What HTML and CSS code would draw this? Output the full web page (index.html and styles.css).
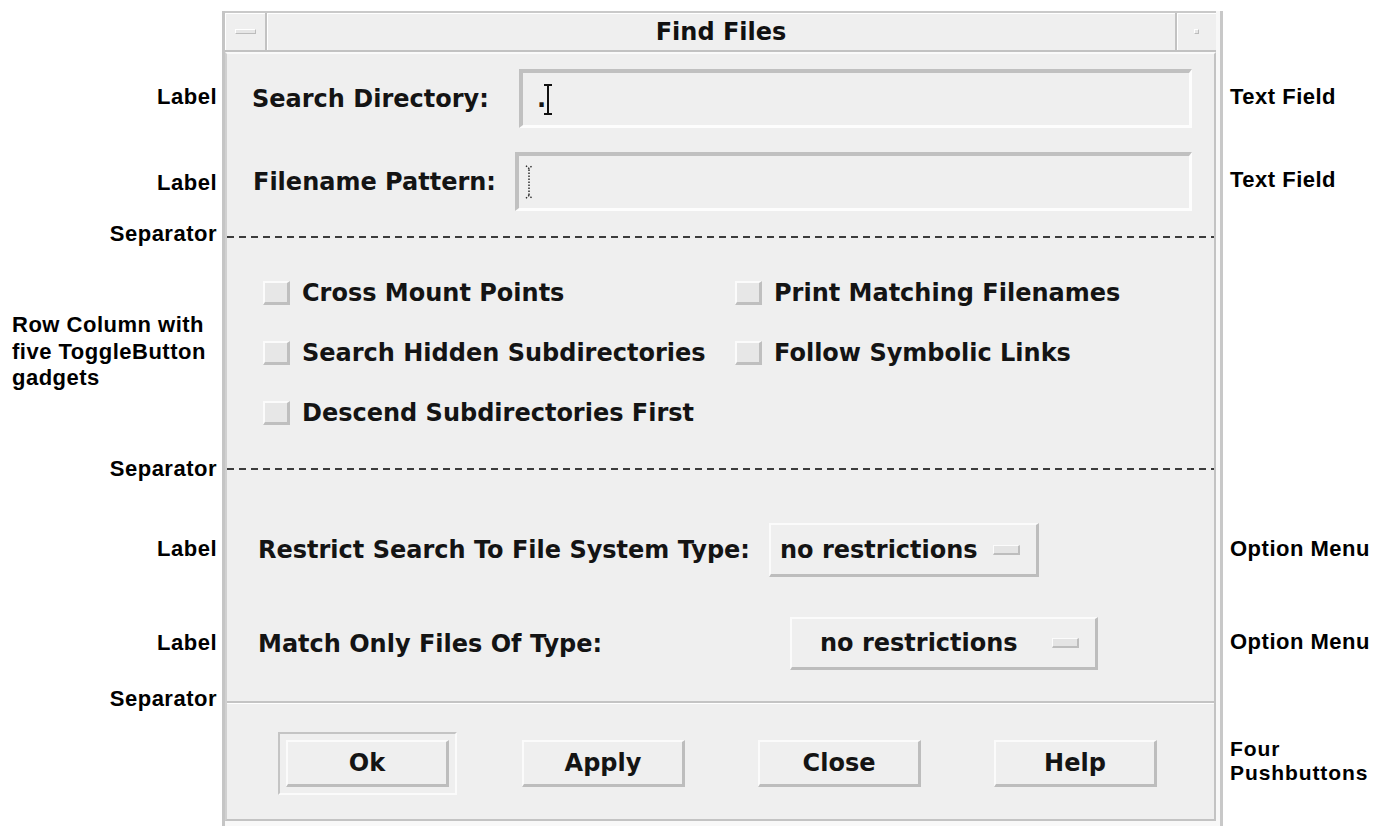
FILE: index.html
```html
<!DOCTYPE html>
<html lang="en">
<head>
<meta charset="utf-8">
<title>Find Files</title>
<link rel="stylesheet" href="styles.css">
</head>
<body>
<div class="stage">
  <div class="notes notes-left">
    <div class="note nl-1">Label</div>
    <div class="note nl-2">Label</div>
    <div class="note nl-3">Separator</div>
    <div class="note note-block nl-4">Row Column with<br>five ToggleButton<br>gadgets</div>
    <div class="note nl-5">Separator</div>
    <div class="note nl-6">Label</div>
    <div class="note nl-7">Label</div>
    <div class="note nl-8">Separator</div>
  </div>

  <div class="window">
    <div class="titlebar">
      <div class="wm-btn wm-menu"><span class="wm-bar"></span></div>
      <div class="wm-title">Find Files</div>
      <div class="wm-btn wm-max"><span class="wm-dot"></span></div>
    </div>

    <div class="dialog">
      <div class="form">
        <div class="field-row row-dir">
          <span class="lbl">Search Directory:</span>
          <div class="textfield">
            <span class="value">.</span>
            <svg class="ibeam" width="10" height="31" viewBox="0 0 10 31"><path d="M1 1h8M5 1v29M1 30h8" stroke="#111" stroke-width="2" fill="none"/></svg>
          </div>
        </div>
        <div class="field-row row-pat">
          <span class="lbl">Filename Pattern:</span>
          <div class="textfield">
            <svg class="ibeam-off" width="8" height="34" viewBox="0 0 8 34"><path d="M1 0.8L4 3.5L7 0.8M4 4.5V30M1 33.2L4 30.5L7 33.2" stroke="#222" stroke-width="1.4" stroke-dasharray="1.4 1.6" fill="none"/></svg>
          </div>
        </div>

        <div class="separator sep-top"></div>

        <div class="toggles">
          <div class="toggle"><span class="check"></span><span>Cross Mount Points</span></div>
          <div class="toggle"><span class="check"></span><span>Print Matching Filenames</span></div>
          <div class="toggle"><span class="check"></span><span>Search Hidden Subdirectories</span></div>
          <div class="toggle"><span class="check"></span><span>Follow Symbolic Links</span></div>
          <div class="toggle"><span class="check"></span><span>Descend Subdirectories First</span></div>
        </div>

        <div class="separator"></div>

        <div class="opt-row opt-restrict">
          <span class="opt-label">Restrict Search To File System Type:</span>
          <div class="optmenu"><span>no restrictions</span><span class="indicator"></span></div>
        </div>
        <div class="opt-row opt-match">
          <span class="opt-label">Match Only Files Of Type:</span>
          <div class="optmenu"><span>no restrictions</span><span class="indicator"></span></div>
        </div>
      </div>

      <div class="buttonbar">
        <div class="default-ring"><button class="pushbtn">Ok</button></div>
        <button class="pushbtn">Apply</button>
        <button class="pushbtn">Close</button>
        <button class="pushbtn">Help</button>
      </div>
    </div>
  </div>

  <div class="notes notes-right">
    <div class="note nr-1">Text Field</div>
    <div class="note nr-2">Text Field</div>
    <div class="note nr-3">Option Menu</div>
    <div class="note nr-4">Option Menu</div>
    <div class="note note-pair nr-5">Four<br>Pushbuttons</div>
  </div>
</div>
</body>
</html>
```

FILE: styles.css
```css
* { box-sizing: border-box; }

html, body {
  margin: 0;
  padding: 0;
}

body {
  width: 1387px;
  height: 826px;
  overflow: hidden;
  background: #ffffff;
  color: #141414;
  font-family: "DejaVu Sans", "Liberation Sans", sans-serif;
}

.stage {
  display: grid;
  grid-template-columns: 222px 1004px 161px;
  height: 826px;
}

/* ---------- callout labels on both sides ---------- */
.notes {
  display: flex;
  flex-direction: column;
  font-family: "Liberation Sans", Arial, sans-serif;
  font-weight: bold;
  font-size: 22px;
  letter-spacing: 0.5px;
  color: #000;
}

.note {
  height: 24px;
  line-height: 24px;
  white-space: nowrap;
}

.notes-left {
  align-items: flex-end;
  padding-right: 5px;
}

.notes-right {
  align-items: flex-start;
  padding-left: 4px;
}

.note-block {
  align-self: flex-start;
  margin-left: 12px;
  height: auto;
  line-height: 26.5px;
}

.note-pair {
  height: auto;
  font-size: 21px;
  letter-spacing: 0.9px;
  line-height: 24px;
}

.nl-1 { margin-top: 85px; }
.nl-2 { margin-top: 62px; }
.nl-3 { margin-top: 27px; }
.nl-4 { margin-top: 66px; }
.nl-5 { margin-top: 65px; }
.nl-6 { margin-top: 56px; }
.nl-7 { margin-top: 70px; }
.nl-8 { margin-top: 32px; }

.nr-1 { margin-top: 85px; }
.nr-2 { margin-top: 59px; }
.nr-3 { margin-top: 345px; }
.nr-4 { margin-top: 69px; }
.nr-5 { margin-top: 83px; }

/* ---------- window frame ---------- */
.window {
  width: 1001px;
  height: 815px;
  margin-top: 11px;
  border-left: 3px solid #c5c5c5;
  border-right: 3px solid #c8c8c8;
  padding-right: 4px;
  background: #f8f8f8;
  display: flex;
  flex-direction: column;
}

.titlebar {
  height: 41px;
  flex: none;
  display: flex;
  background: #efefef;
  border-top: 2px solid #c9c9c9;
  border-bottom: 2px solid #c2c2c2;
}

.wm-btn {
  flex: none;
  display: flex;
  align-items: center;
  justify-content: center;
  box-shadow: inset 1px 1px 0 #ffffff;
}

.wm-menu {
  width: 42px;
  border-right: 2px solid #c2c2c2;
}

.wm-max {
  width: 41px;
  border-left: 2px solid #c2c2c2;
}

.wm-bar {
  width: 21px;
  height: 5px;
  background: #e6e6e6;
  border: 1px solid;
  border-color: #ffffff #bcbcbc #bcbcbc #ffffff;
}

.wm-dot {
  width: 5px;
  height: 5px;
  background: #e6e6e6;
  border: 1px solid;
  border-color: #ffffff #bcbcbc #bcbcbc #ffffff;
}

.wm-title {
  flex: 1;
  display: flex;
  align-items: center;
  justify-content: center;
  font-weight: bold;
  font-size: 24px;
  color: #111;
  box-shadow: inset 1px 1px 0 #ffffff;
}

/* ---------- dialog body ---------- */
.dialog {
  height: 769px;
  flex: none;
  display: flex;
  flex-direction: column;
  background: #efefef;
  border: 2px solid;
  border-color: #fafafa #c3c3c3 #c3c3c3 #d0d0d0;
  font-weight: bold;
  font-size: 24px;
}

.form {
  flex: 1;
  display: flex;
  flex-direction: column;
}

.field-row {
  height: 59px;
  flex: none;
  display: flex;
  align-items: center;
  padding: 0 22px 0 25px;
}

.row-dir { margin-top: 15px; }
.row-pat { margin-top: 24px; padding-left: 26px; }

.lbl { white-space: nowrap; }

.textfield {
  margin-left: auto;
  height: 59px;
  display: flex;
  align-items: center;
  background: #efefef;
  border-style: solid;
  border-width: 4px 3px 3px 4px;
  border-color: #c0c0c0 #fdfdfd #fdfdfd #c0c0c0;
}

.row-dir .textfield { width: 673px; padding-left: 14px; }
.row-pat .textfield { width: 677px; padding-left: 6px; }

.ibeam { margin-left: -3px; }

.separator {
  height: 2px;
  flex: none;
  background: repeating-linear-gradient(to right, #3c3c3c 0 7px, transparent 7px 12px);
}

.sep-top { margin-top: 25px; }

.toggles {
  flex: none;
  display: grid;
  grid-template-columns: 472px 1fr;
  grid-auto-rows: 60px;
  padding: 25px 0 25px 36px;
}

.toggle {
  display: flex;
  align-items: center;
  gap: 12px;
  white-space: nowrap;
}

.check {
  width: 27px;
  height: 24px;
  flex: none;
  background: #e7e7e7;
  border-style: solid;
  border-width: 2px 3px 3px 2px;
  border-color: #fbfbfb #bfbfbf #bfbfbf #fbfbfb;
}

.opt-row {
  flex: none;
  display: flex;
  align-items: center;
  padding-left: 31px;
}

.opt-restrict { margin-top: 53px; height: 54px; }
.opt-match { margin-top: 40px; height: 53px; }

.opt-label { white-space: nowrap; flex: none; }
.opt-restrict .opt-label { width: 511px; }
.opt-match .opt-label { width: 532px; }

.optmenu {
  height: 100%;
  display: flex;
  align-items: center;
  justify-content: space-between;
  white-space: nowrap;
  background: #efefef;
  border-style: solid;
  border-width: 2px 3px 3px 2px;
  border-color: #fbfbfb #bdbdbd #bdbdbd #fbfbfb;
  padding-right: 16px;
}

.opt-restrict .optmenu { width: 270px; padding-left: 9px; }
.opt-match .optmenu { width: 308px; padding-left: 28px; }

.indicator {
  width: 27px;
  height: 10px;
  flex: none;
  background: #e4e4e4;
  border-style: solid;
  border-width: 1px 2px 2px 1px;
  border-color: #fbfbfb #bdbdbd #bdbdbd #fbfbfb;
}

/* ---------- action area ---------- */
.buttonbar {
  height: 118px;
  flex: none;
  display: grid;
  grid-template-columns: repeat(4, 236px);
  grid-template-rows: 63px;
  align-items: center;
  justify-items: center;
  padding: 29px 0 0 22.5px;
  border-top: 2px solid #c4c4c4;
  box-shadow: inset 0 1px 0 #ffffff;
}

.default-ring {
  padding: 6px;
  border: 2px solid;
  border-color: #c4c4c4 #fbfbfb #fbfbfb #c4c4c4;
}

.pushbtn {
  display: block;
  width: 163px;
  height: 47px;
  margin: 0;
  padding: 0;
  font-family: inherit;
  font-weight: bold;
  font-size: 24px;
  color: #141414;
  background: #efefef;
  border-style: solid;
  border-width: 2px 3px 3px 2px;
  border-color: #fbfbfb #bdbdbd #bdbdbd #fbfbfb;
}
```
